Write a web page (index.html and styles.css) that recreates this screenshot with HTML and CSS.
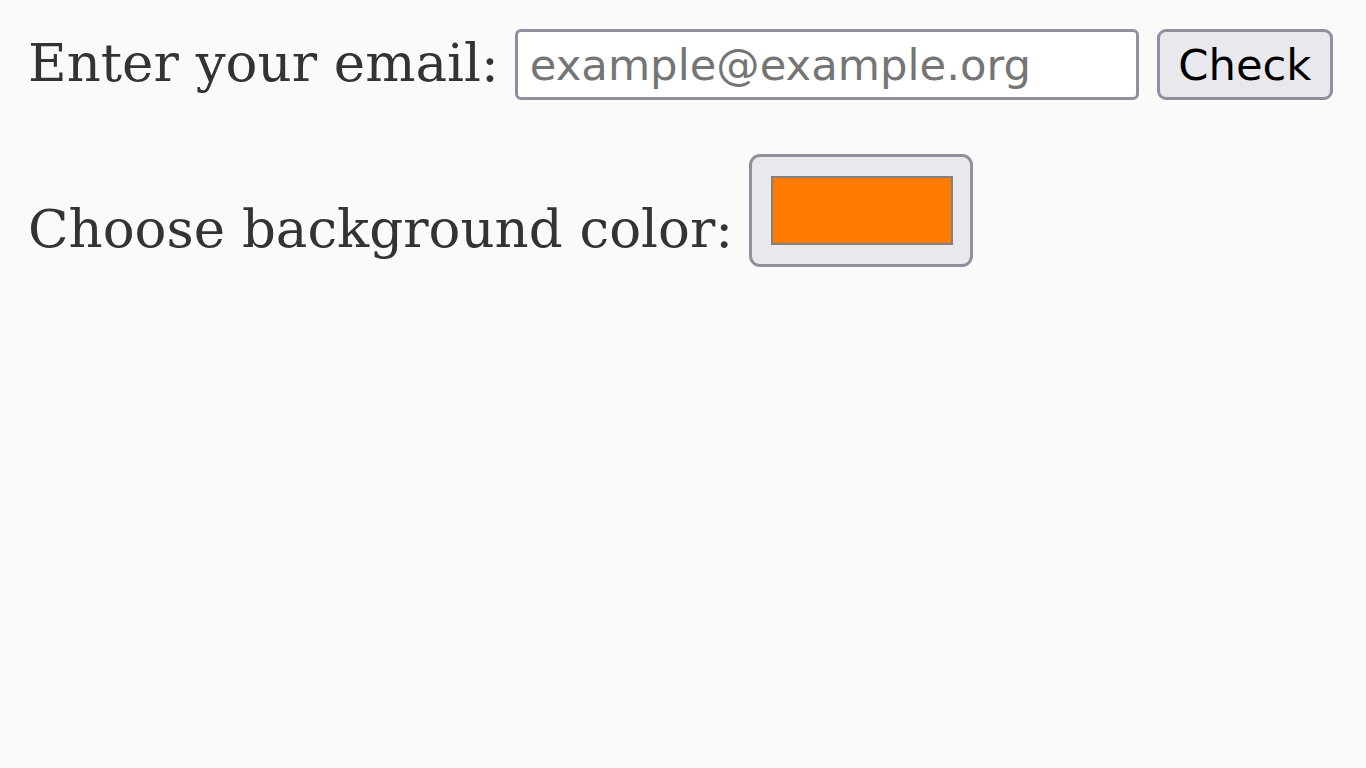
FILE: index.html
```html
<!DOCTYPE html>
<html lang="en">
<head>
<meta charset="utf-8">
<title>Form</title>
<link rel="stylesheet" href="styles.css">
</head>
<body>
<div class="row row-email">
  <label class="label label-email" for="email">Enter your email:</label>
  <input class="email-input" id="email" type="email" placeholder="example@example.org">
  <button class="check-btn" type="button">Check</button>
</div>
<div class="row row-color">
  <label class="label label-color" for="bg">Choose background color:</label>
  <input class="color-input" id="bg" type="color" value="#ff7b00">
</div>
</body>
</html>
```
FILE: styles.css
```css
html, body {
  margin: 0;
  padding: 0;
  background: #fafafa;
}
body {
  color: #333333;
  font-family: "DejaVu Serif", serif;
  font-size: 53px;
  padding-left: 28px;
}
.row {
  display: flex;
  align-items: flex-end;
}
.row-email {
  padding-top: 29px;
}
.row-color {
  margin-top: 54px;
}
.label {
  line-height: normal;
  padding-bottom: 7px;
}
.label-email {
  margin-right: 16px;
}
.label-color {
  margin-right: 16px;
  padding-bottom: 8px;
}
.email-input {
  box-sizing: border-box;
  width: 624px;
  height: 71px;
  margin: 0 18px 0 0;
  padding: 0 12px;
  border: 3px solid #8f8f9d;
  border-radius: 6px;
  background: #ffffff;
  font-family: "DejaVu Sans", sans-serif;
  font-size: 43.33px;
  color: #000000;
  outline: none;
}
.email-input::placeholder {
  color: #757575;
  opacity: 1;
}
.check-btn {
  box-sizing: border-box;
  width: 176px;
  height: 71px;
  margin: 0;
  padding: 0;
  border: 3px solid #8f8f9d;
  border-radius: 9px;
  background: #e9e9ed;
  font-family: "DejaVu Sans", sans-serif;
  font-size: 43.33px;
  color: #000000;
}
.color-input {
  -webkit-appearance: none;
  appearance: none;
  box-sizing: border-box;
  width: 224px;
  height: 113px;
  margin: 0;
  padding: 19px 17px 19px 19px;
  border: 3px solid #8f8f9d;
  border-radius: 11px;
  background: #e9e9ed;
  cursor: pointer;
}
.color-input::-webkit-color-swatch-wrapper {
  padding: 0;
}
.color-input::-webkit-color-swatch {
  border: 2px solid #808080;
  border-radius: 0;
}
```
